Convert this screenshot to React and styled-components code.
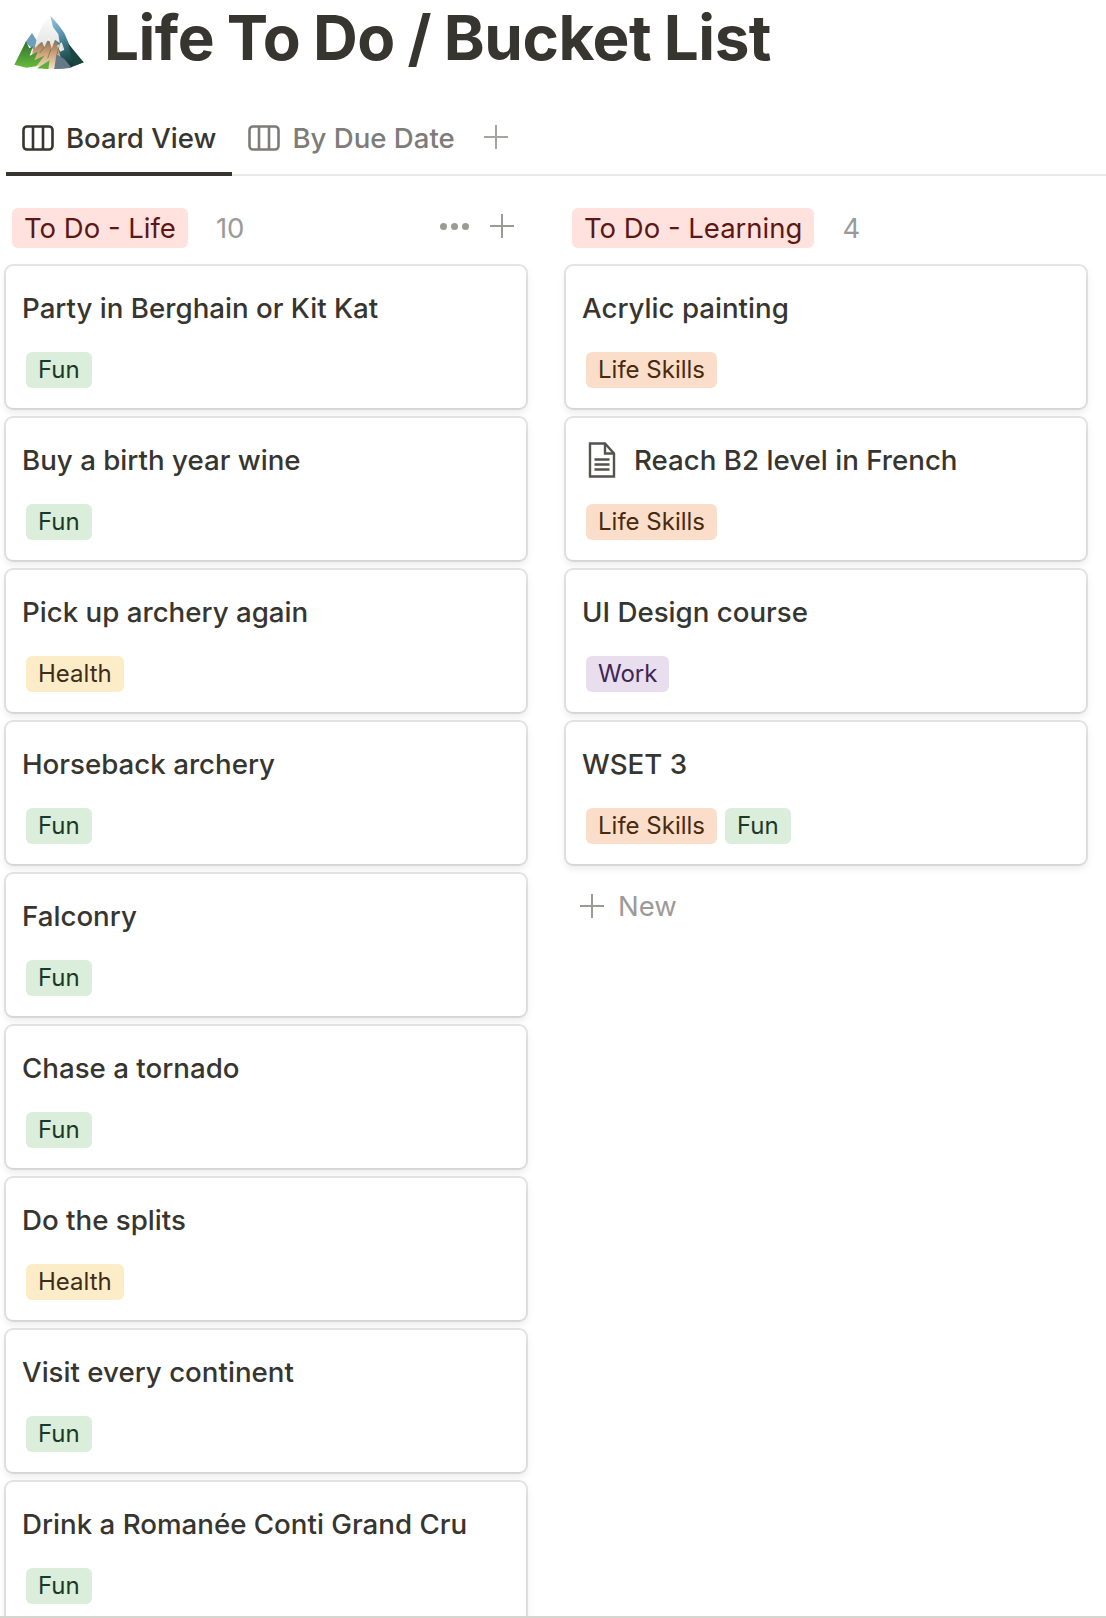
import React from 'react';
import styled, { createGlobalStyle } from 'styled-components';

const lifeCards = [
  { title: 'Party in Berghain or Kit Kat', tags: ['Fun'] },
  { title: 'Buy a birth year wine', tags: ['Fun'] },
  { title: 'Pick up archery again', tags: ['Health'] },
  { title: 'Horseback archery', tags: ['Fun'] },
  { title: 'Falconry', tags: ['Fun'] },
  { title: 'Chase a tornado', tags: ['Fun'] },
  { title: 'Do the splits', tags: ['Health'] },
  { title: 'Visit every continent', tags: ['Fun'] },
  { title: 'Drink a Romanée Conti Grand Cru', tags: ['Fun'] },
];

const learningCards = [
  { title: 'Acrylic painting', tags: ['Life Skills'] },
  { title: 'Reach B2 level in French', tags: ['Life Skills'], doc: true },
  { title: 'UI Design course', tags: ['Work'] },
  { title: 'WSET 3', tags: ['Life Skills', 'Fun'] },
];

const tagColors = {
  Fun: ['#dbeddb', '#1c3829'],
  Health: ['#fdecc8', '#402c1b'],
  'Life Skills': ['#fadec9', '#49290e'],
  Work: ['#e8deee', '#412454'],
};

const Mountain = () => (
  <MountainSvg viewBox="38 46 212 168">
    <defs>
      <linearGradient id="snow" x1="0" y1="0" x2="0" y2="1">
        <stop offset="0" stopColor="#fdfdfc" />
        <stop offset="1" stopColor="#dfe4e2" />
      </linearGradient>
      <linearGradient id="shade" x1="0" y1="0" x2="0.3" y2="1">
        <stop offset="0" stopColor="#9ccbe4" />
        <stop offset="0.4" stopColor="#5b93ae" />
        <stop offset="0.75" stopColor="#2a5f66" />
        <stop offset="1" stopColor="#163e3a" />
      </linearGradient>
      <linearGradient id="rock" x1="0" y1="0" x2="0" y2="1">
        <stop offset="0" stopColor="#8f6f50" />
        <stop offset="0.5" stopColor="#cfa87e" />
        <stop offset="1" stopColor="#efdfc2" />
      </linearGradient>
      <linearGradient id="grass" x1="0" y1="0" x2="0" y2="1">
        <stop offset="0" stopColor="#2f6f30" />
        <stop offset="1" stopColor="#66bb3a" />
      </linearGradient>
    </defs>
    <path d="M73 128 L93 100 L107 122 L100 152 Z" fill="#6f9fb8" />
    <path d="M148 48 L172 75 L190 100 L205 135 L225 165 L248 188 L205 205 L160 208 L150 130 Z" fill="url(#shade)" />
    <path d="M96 146 L128 122 L168 126 L178 170 L190 205 L130 208 L90 190 Z" fill="url(#rock)" />
    <path d="M148 48 L156 82 L172 104 L176 130 L162 120 L152 146 L143 116 L130 142 L122 124 L102 146 L108 114 L125 75 Z" fill="url(#snow)" />
    <path d="M168 138 L182 128 L190 150 L178 156 Z" fill="#e3e9e9" />
    <path d="M75 125 L85 146 L96 140 L86 168 L110 156 L100 182 L130 168 L106 200 L76 204 L40 195 Z" fill="url(#grass)" />
    <path d="M108 206 L146 182 L142 208 Z" fill="#5fae39" />
    <path d="M166 164 L190 178 L212 204 L160 208 Z" fill="#66798a" />
    <path d="M202 132 L248 188 L218 199 Z" fill="#1a4541" />
    <path d="M130 142 L116 160 M150 148 L140 176 M176 132 L168 164" fill="none" stroke="#4a3a2b" strokeWidth="3" opacity="0.4" />
  </MountainSvg>
);

const BoardIcon = () => (
  <TabSvg viewBox="0 0 32 26" fill="none" stroke="currentColor" strokeWidth="2.6">
    <rect x="1.5" y="1.5" width="29" height="23" rx="3.5" />
    <path d="M11 2v22M21 2v22" />
  </TabSvg>
);

const Plus = ({ size }) => (
  <PlusSvg $size={size} viewBox="0 0 24 24" fill="none" stroke="currentColor" strokeWidth="2">
    <path d="M12 0v24M0 12h24" />
  </PlusSvg>
);

const DocIcon = () => (
  <DocSvg viewBox="0 0 28 36" fill="none" stroke="#55534e" strokeWidth="2.4">
    <path d="M2 1.5h15l9 10v23H2z" />
    <path d="M17 1.5v10h9" />
    <path d="M6.5 17.5h15M6.5 22.5h15M6.5 27.5h15" />
  </DocSvg>
);

const Card = ({ title, tags, doc }) => (
  <CardBox>
    <CardTitle>
      {doc && <DocIcon />}
      {title}
    </CardTitle>
    <TagRow>
      {tags.map((t) => (
        <Tag key={t} $bg={tagColors[t][0]} $fg={tagColors[t][1]}>{t}</Tag>
      ))}
    </TagRow>
  </CardBox>
);

export default function App() {
  return (
    <Page>
      <GlobalStyle />
      <Header>
        <Mountain />
        <Title>Life To Do / Bucket List</Title>
      </Header>
      <Tabs>
        <TabItem $active>
          <BoardIcon />
          Board View
        </TabItem>
        <TabItem>
          <BoardIcon />
          By Due Date
        </TabItem>
        <AddTab><Plus size={24} /></AddTab>
      </Tabs>
      <Board>
        <Column>
          <GroupHeader>
            <GroupPill>To Do - Life</GroupPill>
            <Count>10</Count>
            <GroupActions>
              <Dots><i /><i /><i /></Dots>
              <Plus size={24} />
            </GroupActions>
          </GroupHeader>
          {lifeCards.map((c) => <Card key={c.title} {...c} />)}
        </Column>
        <Column>
          <GroupHeader>
            <GroupPill>To Do - Learning</GroupPill>
            <Count>4</Count>
          </GroupHeader>
          {learningCards.map((c) => <Card key={c.title} {...c} />)}
          <NewRow>
            <Plus size={24} />
            New
          </NewRow>
        </Column>
      </Board>
      <BottomEdge />
    </Page>
  );
}

const GlobalStyle = createGlobalStyle`
  html, body {
    margin: 0;
    padding: 0;
    background: #fff;
  }
  body {
    font-family: Inter, "Liberation Sans", sans-serif;
    color: #37352f;
  }
`;

const Page = styled.div`
  position: relative;
  width: 1106px;
  height: 1618px;
  overflow: hidden;
  background: #fff;
`;

const Header = styled.div`
  display: flex;
  align-items: flex-start;
  height: 98px;
  padding-left: 13px;
  box-sizing: border-box;
`;

const MountainSvg = styled.svg`
  width: 72px;
  height: 56px;
  margin-top: 15px;
  flex: none;
`;

const Title = styled.h1`
  margin: 0 0 0 19px;
  font-size: 62px;
  line-height: 76px;
  font-weight: 700;
  letter-spacing: -0.5px;
  word-spacing: -1.5px;
  color: #37352f;
  white-space: nowrap;
`;

const Tabs = styled.div`
  display: flex;
  align-items: stretch;
  height: 78px;
  margin-left: 6px;
  border-bottom: 2px solid #e9e9e7;
  box-sizing: border-box;
`;

const TabItem = styled.div`
  display: flex;
  align-items: center;
  gap: 12px;
  padding: 2px 16px 0 16px;
  margin-bottom: -2px;
  font-size: 27.6px;
  font-weight: 500;
  color: ${(p) => (p.$active ? '#37352f' : '#7d7c78')};
  box-shadow: ${(p) => (p.$active ? 'inset 0 -4px 0 #37352f' : 'none')};
  box-sizing: border-box;
`;

const TabSvg = styled.svg`
  width: 32px;
  height: 26px;
  flex: none;
`;

const AddTab = styled.div`
  display: flex;
  align-items: center;
  padding: 2px 0 0 13px;
  color: #a5a4a1;
`;

const PlusSvg = styled.svg`
  width: ${(p) => p.$size}px;
  height: ${(p) => p.$size}px;
  flex: none;
`;

const Board = styled.div`
  display: grid;
  grid-template-columns: 520px 520px;
  column-gap: 40px;
  align-items: start;
  padding: 32px 0 0 6px;
`;

const Column = styled.div`
  display: flex;
  flex-direction: column;
  gap: 10px;
`;

const GroupHeader = styled.div`
  display: flex;
  align-items: center;
  height: 40px;
  margin-bottom: 8px;
  padding: 0 12px 0 6px;
  color: #9b9a97;
`;

const GroupPill = styled.div`
  height: 40px;
  line-height: 41px;
  padding: 0 12px;
  border-radius: 6px;
  background: #ffe2dd;
  color: #5d1715;
  font-size: 27.5px;
  white-space: nowrap;
`;

const Count = styled.div`
  margin-left: 28px;
  font-size: 27.5px;
  color: #9b9a97;
`;

const GroupActions = styled.div`
  display: flex;
  align-items: center;
  gap: 21px;
  margin-left: auto;
  margin-top: -4px;
`;

const Dots = styled.div`
  display: flex;
  gap: 4px;
  i {
    display: block;
    width: 7px;
    height: 7px;
    border-radius: 50%;
    background: #9b9a97;
  }
`;

const CardBox = styled.div`
  height: 142px;
  padding: 0 16px;
  box-sizing: border-box;
  border-radius: 7px;
  background: #fff;
  box-shadow: rgba(15, 15, 15, 0.1) 0 0 0 2px, rgba(15, 15, 15, 0.1) 0 4px 8px;
  flex: none;
`;

const CardTitle = styled.div`
  display: flex;
  align-items: center;
  height: 84px;
  box-sizing: border-box;
  font-size: 27.7px;
  font-weight: 500;
  color: #37352f;
  white-space: nowrap;
`;

const DocSvg = styled.svg`
  width: 28px;
  height: 36px;
  margin: 0 18px 0 6px;
  flex: none;
`;

const TagRow = styled.div`
  display: flex;
  gap: 8px;
  padding: 2px 4px 0;
`;

const Tag = styled.span`
  height: 36px;
  line-height: 36px;
  padding: 0 12px;
  border-radius: 6px;
  font-size: 24px;
  background: ${(p) => p.$bg};
  color: ${(p) => p.$fg};
`;

const NewRow = styled.div`
  display: flex;
  align-items: center;
  gap: 14px;
  margin-top: 6px;
  padding-left: 14px;
  height: 52px;
  font-size: 27.5px;
  color: #9b9a97;
`;

const BottomEdge = styled.div`
  position: absolute;
  left: 0;
  right: 0;
  bottom: 0;
  height: 2px;
  background: #d6d6d0;
`;
